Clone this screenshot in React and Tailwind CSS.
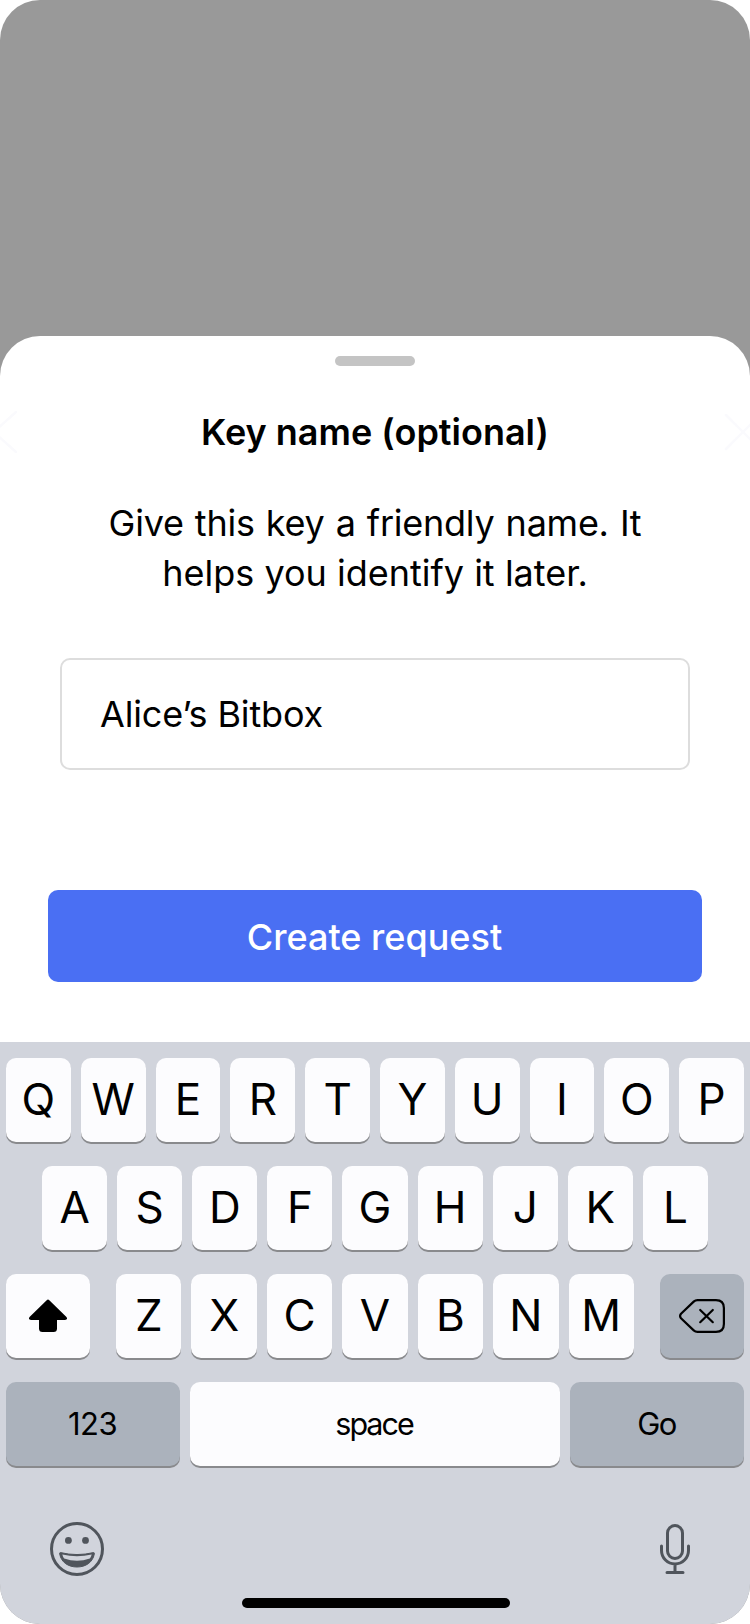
import React from "react";

function Key({ children, dark = false, className = "flex-1", textClass = "pb-[2px] text-[44px]" }) {
  return (
    <button
      type="button"
      className={`flex h-[84px] items-center justify-center rounded-[10px] text-black shadow-[0_2px_0_#898a8d] ${
        dark ? "bg-[#abb2bc]" : "bg-[#fcfcfe]"
      } ${textClass} ${className}`}
    >
      {children}
    </button>
  );
}

function ShiftIcon() {
  return (
    <svg width="38" height="34" viewBox="0 0 38 34" className="block">
      <path
        d="M17.7 1.2 Q19 0 20.3 1.2 L37.2 17.7 C38.8 19.3 38 21 36 21 H28 V29.5 Q28 33 24.5 33 H13.5 Q10 33 10 29.5 V21 H2 C0 21 -0.8 19.3 0.8 17.7 Z"
        fill="#000"
      />
    </svg>
  );
}

function BackspaceIcon() {
  return (
    <svg width="46" height="34" viewBox="0 0 46 34" className="block" fill="none" stroke="#000" strokeWidth="2.2" strokeLinecap="round" strokeLinejoin="round">
      <path d="M18.5 1.1 H37 Q44.9 1.1 44.9 9 V25 Q44.9 32.9 37 32.9 H18.5 Q16.3 32.9 14.7 31.4 L2 19.3 Q0.2 17 2 14.7 L14.7 2.6 Q16.3 1.1 18.5 1.1 Z" />
      <path d="M21.2 11 L33.8 23.2 M33.8 11 L21.2 23.2" />
    </svg>
  );
}

function SmileIcon() {
  return (
    <svg width="54" height="54" viewBox="0 0 54 54" className="block">
      <circle cx="27" cy="27" r="25.5" fill="none" stroke="#50555c" strokeWidth="3" />
      <circle cx="18.4" cy="18.4" r="3.4" fill="#50555c" />
      <circle cx="35.5" cy="18.4" r="3.4" fill="#50555c" />
      <path d="M10.5 30.6 Q27 34.5 43.5 30.6 Q44.5 30.5 44.3 32 C42.8 40.5 35.5 45 27 45 C18.5 45 11.2 40.5 9.7 32 Q9.5 30.5 10.5 30.6 Z" fill="#50555c" stroke="#50555c" strokeWidth="1" />
      <path d="M12.3 32.6 Q27 36 41.7 32.6 Q41.2 34.8 39.8 36.6 Q27 41 14.2 36.6 Q12.8 34.8 12.3 32.6 Z" fill="#d1d4dc" />
    </svg>
  );
}

function MicIcon() {
  return (
    <svg width="30" height="50" viewBox="0 0 30 50" className="block" fill="none" stroke="#50555c" strokeWidth="3" strokeLinecap="round">
      <rect x="7.5" y="1.5" width="15" height="33" rx="7.5" />
      <path d="M1.5 22 V26.5 A13.5 13.5 0 0 0 28.5 26.5 V22 M15 40 V48 M7 48.5 H23" />
    </svg>
  );
}

export default function App() {
  return (
    <div className="h-[1624px] w-[750px] bg-white font-['Inter','Liberation_Sans',sans-serif] text-black">
      <div className="flex h-full flex-col overflow-hidden rounded-[40px] bg-[#999999] pt-[336px]">
        <main className="relative flex h-[706px] shrink-0 flex-col items-center rounded-t-[40px] bg-white pt-5">
          <div className="h-[10px] w-20 rounded-full bg-[#c4c4c4]" />
          <svg width="18" height="44" viewBox="0 0 18 44" className="absolute left-0 top-[74px]" fill="none" stroke="#fafafd" strokeWidth="2.5" strokeLinecap="round">
            <path d="M16 2 L-4 20 Q-6 22 -4 24 L16 42" />
          </svg>
          <svg width="26" height="38" viewBox="0 0 26 38" className="absolute right-0 top-[77px]" fill="none" stroke="#fafafd" strokeWidth="2.5" strokeLinecap="round">
            <path d="M2 2 L36 36 M36 2 L2 36" />
          </svg>
          <h1 className="mt-[41px] text-[36px] font-semibold leading-[50px]">Key name (optional)</h1>
          <p className="mt-[41px] text-center text-[36px] leading-[50px]">
            <span className="tracking-[-0.25px] [word-spacing:1.3px]">Give this key a friendly name. It</span>
            <br />
            <span className="tracking-[-0.03px] [word-spacing:0.2px]">helps you identify it later.</span>
          </p>
          <input
            type="text"
            aria-label="Key name"
            defaultValue="Alice’s Bitbox"
            className="mt-[60px] h-28 w-[630px] rounded-[10px] border-2 border-[#dddddd] bg-white px-[38px] text-[36px] tracking-[-0.16px] outline-none"
          />
          <button type="button" className="mt-[120px] h-[92px] w-[654px] rounded-[10px] bg-[#4a6ff3] pr-px pt-px text-[36px] font-medium text-white">
            Create request
          </button>
        </main>

        <section className="flex flex-1 flex-col bg-[#d1d4dc] px-[6px] pt-4">
          <div className="flex flex-col gap-6">
            <div className="flex gap-[10px]">
              {"QWERTYUIOP".split("").map((k) => <Key key={k}>{k}</Key>)}
            </div>
            <div className="flex gap-[10px] px-9">
              {"ASDFGHJKL".split("").map((k) => <Key key={k}>{k}</Key>)}
            </div>
            <div className="flex gap-[26px]">
              <Key className="w-[84px]" textClass=""><ShiftIcon /></Key>
              <div className="flex flex-1 gap-[10px]">
                {"ZXCVBNM".split("").map((k) => <Key key={k}>{k}</Key>)}
              </div>
              <Key dark className="w-[84px]" textClass=""><BackspaceIcon /></Key>
            </div>
            <div className="flex gap-[10px]">
              <Key dark className="w-[174px]" textClass="pr-px text-[31px] tracking-[-0.5px]">123</Key>
              <Key className="flex-1" textClass="pr-[2px] text-[30.5px] tracking-[-2px]">space</Key>
              <Key dark className="w-[174px]" textClass="pr-px text-[31px] tracking-[-1.6px]">Go</Key>
            </div>
          </div>
          <div className="mt-[56px] flex items-start justify-between pl-[44px] pr-[54px]">
            <SmileIcon />
            <div className="pt-[2px]"><MicIcon /></div>
          </div>
          <div className="ml-[236px] mt-[22px] h-[10px] w-[268px] rounded-full bg-black" />
        </section>
      </div>
    </div>
  );
}
